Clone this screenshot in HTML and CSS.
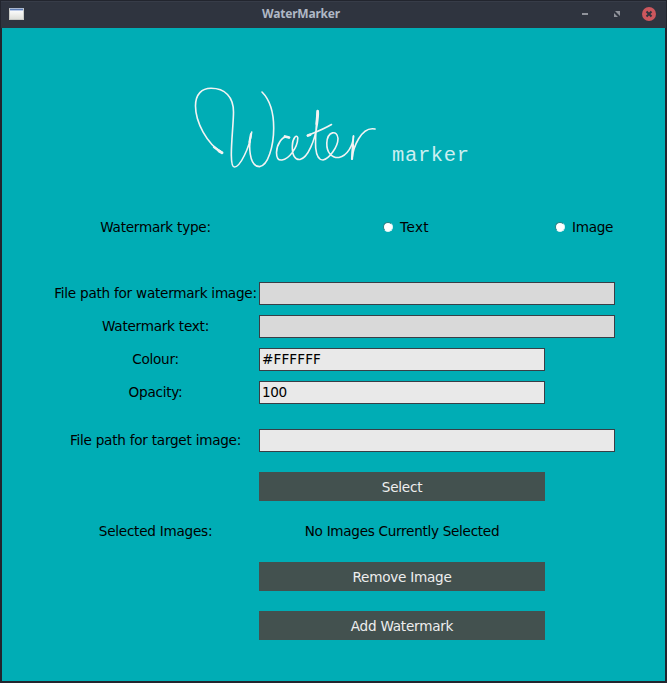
FILE: index.html
```html
<!DOCTYPE html>
<html lang="en">
<head>
<meta charset="utf-8">
<title>WaterMarker</title>
<link rel="stylesheet" href="styles.css">
</head>
<body>
<div class="window">
  <header class="titlebar">
    <span class="app-icon"></span>
    <span class="title">WaterMarker</span>
    <svg class="controls" width="80" height="16" viewBox="0 0 80 16">
      <path d="M6 7h6" stroke="#90939b" stroke-width="2"/>
      <path d="M39 4h5v5zM38 6v4h4z" fill="#90939b"/>
      <circle cx="73" cy="7" r="7" fill="#cc575d"/>
      <path d="M70.500 4.500l5 5m0-5l-5 5" stroke="#2f343f" stroke-width="2"/>
    </svg>
  </header>
  <main>
    <svg class="logo" width="300" height="100" viewBox="185 80 300 100">
      <g fill="none" stroke="#f3f3f3" stroke-width="1.600" stroke-linecap="round" stroke-linejoin="round">
        <path d="M222 152.500C207 144 195.500 122 195.500 106C195.500 94 202 88.300 211 88.300C225 88.300 233.500 97 233.500 112C233.500 128 228 167 234.500 167C240 167 249.500 148 251.700 132C248 145 249 166.600 259.500 166.600C268 166 273.700 146 273.700 128C273.700 112 269 99 262 92"/>
        <path d="M289 137.500C282 134 276.500 146 276.500 152.500C276.500 158 278 160.500 282 160C289 159 297.500 148 297.800 138C297 133.500 292.500 138 292.300 146C292 155 295 160 300 159.500C308 158 315 140 317.300 124C318.500 115 318.700 110 317.500 110.500C316.500 124 315 138 315.700 148C316.500 156 319 160 323 160C329 159 338 147 338 138.500C337.500 129.500 327.500 131 326.800 143C326.500 153 332 158 339 157.500C347 156 353 146 353.500 136"/>
        <path d="M307.500 135.500C316 132 324 129 331.500 124.500M353.500 136L352 159C353 148 361 126 375 129"/>
        <path d="M219 151L222 152.800M285 136.500L289 137.500M308 135.500L310 134.800" stroke-width="2.800"/>
        <path d="M214 147L220 151.500M353 145L352 159M251 134L249.500 142M317.500 111L316.500 124" stroke-width="2.200"/>
      </g>
      <text class="logo-sub" x="392" y="161" textLength="77">marker</text>
    </svg>
    <form class="form">
      <div class="row types"><span class="label">Watermark type:</span>
        <span class="choice text-choice"><i class="radio"></i>Text</span>
        <span class="choice"><i class="radio"></i>Image</span></div>
      <div class="row path"><span class="label">File path for watermark image:</span><span class="entry wide disabled"></span></div>
      <div class="row"><span class="label">Watermark text:</span><span class="entry wide disabled"></span></div>
      <div class="row"><span class="label">Colour:</span><span class="entry">#FFFFFF</span></div>
      <div class="row"><span class="label">Opacity:</span><span class="entry number">100</span></div>
      <div class="row target"><span class="label">File path for target image:</span><span class="entry wide"></span></div>
      <button type="button" class="select">Select</button>
      <div class="row selected"><span class="label">Selected Images:</span><span class="status">No Images Currently Selected</span></div>
      <button type="button" class="remove">Remove Image</button>
      <button type="button" class="add">Add Watermark</button>
    </form>
  </main>
</div>
</body>
</html>
```
FILE: styles.css
```css
* { box-sizing: border-box; }
body { margin: 0; background: #22252e; }
.window {
  width: 667px;
  height: 683px;
  padding: 1px 2px 2px;
  background: #22252e;
  font: 13.6px/23px "DejaVu Sans", sans-serif;
  letter-spacing: -0.25px;
  color: #000;
}
.titlebar {
  display: grid;
  grid-template-columns: 100px 1fr 165px;
  align-items: center;
  height: 27px;
  margin: 0 -1px;
  background: #2f343f;
  border-top: 1px solid #373c48;
}
.app-icon {
  width: 15px;
  height: 12px;
  margin: 0 0 2px 8px;
  border: 1px solid #c9cbc7;
  border-top-color: #a9b7cf;
  background: linear-gradient(#5f7eb6 0 1px, #bccbe8 1px 2px, #fafafa 2px, #dfdfda);
}
.title {
  margin-bottom: 2px;
  text-align: center;
  font: bold 12px/24px "Noto Sans", sans-serif;
  letter-spacing: -0.2px;
  color: #afb8c5;
}
.controls { justify-self: end; margin-right: 10px; }
main {
  height: 653px;
  padding-top: 52px;
  background: #00adb5;
}
.logo { display: block; margin-left: 183px; }
.logo-sub {
  font: 20.5px "Liberation Mono", monospace;
  letter-spacing: 0;
  fill: #cceff1;
}
.form { display: flex; flex-direction: column; margin-left: 51px; }
.row { display: flex; height: 23px; margin-bottom: 10px; }
.label { width: 206px; padding-right: 1px; text-align: center; white-space: nowrap; }
.types { margin: 36px 0 43px; }
.choice { display: flex; align-items: center; letter-spacing: -0.3px; }
.text-choice { width: 172px; margin-left: 124px; letter-spacing: 0.4px; }
.radio {
  width: 10px;
  height: 10px;
  margin: 0 7px 1px 0;
  border: 1px solid;
  border-color: #267f83 #d9f3f4 #d9f3f4 #267f83;
  border-radius: 50%;
  background: #fff;
}
.entry {
  width: 286px;
  padding-left: 2px;
  border: 1px solid #393e46;
  background: #e9e9e9;
  line-height: 21px;
  letter-spacing: 0.1px;
}
.number { letter-spacing: -0.4px; }
.wide { width: 356px; }
.disabled { background: #d9d9d9; }
.target { margin: 15px 0 20px; }
button {
  width: 286px;
  height: 29px;
  margin: 0 0 0 206px;
  padding: 1px 0 0;
  border: 0;
  background: #43514f;
  color: #eee;
  font: inherit;
  letter-spacing: inherit;
}
.selected { margin: 19px 0; }
.status { width: 286px; text-align: center; letter-spacing: -0.3px; }
.remove { margin-bottom: 20px; }
```
